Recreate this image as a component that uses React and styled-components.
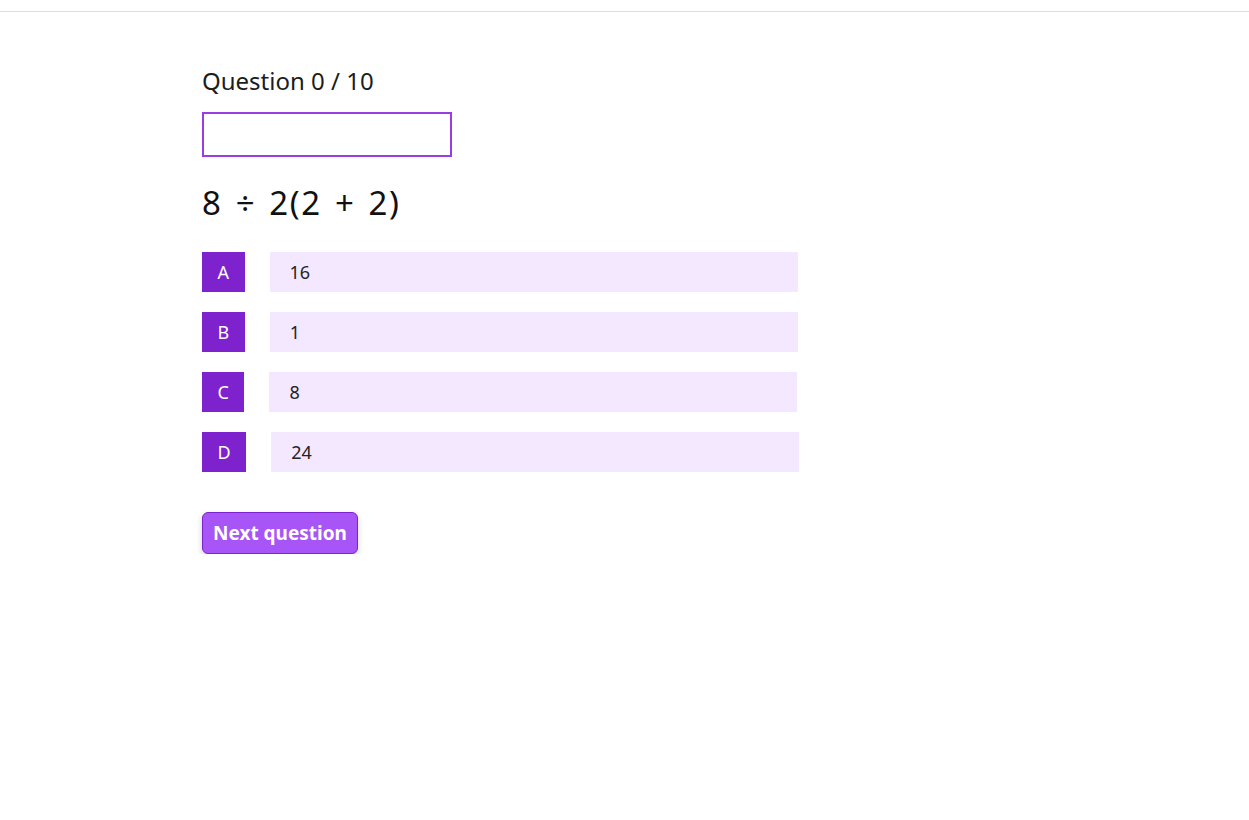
import React, { useState } from "react";
import styled, { createGlobalStyle } from "styled-components";

const GlobalStyle = createGlobalStyle`
  * { box-sizing: border-box; }
  body {
    margin: 0;
    background: #ffffff;
    font-family: "Noto Sans", "Open Sans", sans-serif;
    color: #1c1c1c;
  }
`;

const TopBar = styled.div`
  height: 12px;
  border-bottom: 1px solid #dcdcdc;
`;

const Main = styled.main`
  padding: 53px 0 0 202px;
  display: flex;
  flex-direction: column;
  align-items: flex-start;
`;

const Counter = styled.h2`
  margin: 0;
  font-size: 24px;
  font-weight: 400;
  line-height: 32px;
`;

const NameInput = styled.input`
  margin-top: 15px;
  width: 250px;
  height: 45px;
  border: 2px solid #9b3be6;
  outline: none;
  padding: 0 10px;
  font: inherit;
  font-size: 18px;
`;

const Problem = styled.h1`
  margin: 22px 0 0;
  font-size: 33px;
  font-weight: 400;
  line-height: 48px;
  letter-spacing: 1.6px;
  word-spacing: 3px;
  color: #111;
`;

const Answers = styled.ul`
  list-style: none;
  margin: 25px 0 0;
  padding: 0;
  display: flex;
  flex-direction: column;
  gap: 20px;
`;

const Row = styled.li`
  display: flex;
  align-items: center;
  gap: 25px;
  cursor: pointer;
`;

const Letter = styled.span`
  height: 40px;
  padding: 0 15.5px;
  display: flex;
  align-items: center;
  background: #7e22ce;
  color: #fff;
  font-size: 18px;
`;

const Choice = styled.span`
  width: 528px;
  height: 40px;
  padding-left: 20px;
  display: flex;
  align-items: center;
  background: ${(p) => (p.$picked ? "#e9d5ff" : "#f3e8ff")};
  font-size: 18px;
  color: #242424;
`;

const NextButton = styled.button`
  margin-top: 40px;
  height: 42px;
  padding: 0 10px;
  border: 1px solid #7e22ce;
  border-radius: 6px;
  background: #a855f7;
  color: #fff;
  font-family: inherit;
  font-size: 19px;
  font-weight: 700;
  box-shadow: 0 3px 6px rgba(0, 0, 0, 0.18);
  cursor: pointer;
`;

const answers = [
  { key: "A", text: "16" },
  { key: "B", text: "1" },
  { key: "C", text: "8" },
  { key: "D", text: "24" },
];

export default function App() {
  const [name, setName] = useState("");
  const [picked, setPicked] = useState(null);

  return (
    <>
      <GlobalStyle />
      <TopBar />
      <Main>
        <Counter>Question 0 / 10</Counter>
        <NameInput value={name} onChange={(e) => setName(e.target.value)} />
        <Problem>8 ÷ 2(2 + 2)</Problem>
        <Answers>
          {answers.map((a) => (
            <Row key={a.key} onClick={() => setPicked(a.key)}>
              <Letter>{a.key}</Letter>
              <Choice $picked={picked === a.key}>{a.text}</Choice>
            </Row>
          ))}
        </Answers>
        <NextButton>Next question</NextButton>
      </Main>
    </>
  );
}
